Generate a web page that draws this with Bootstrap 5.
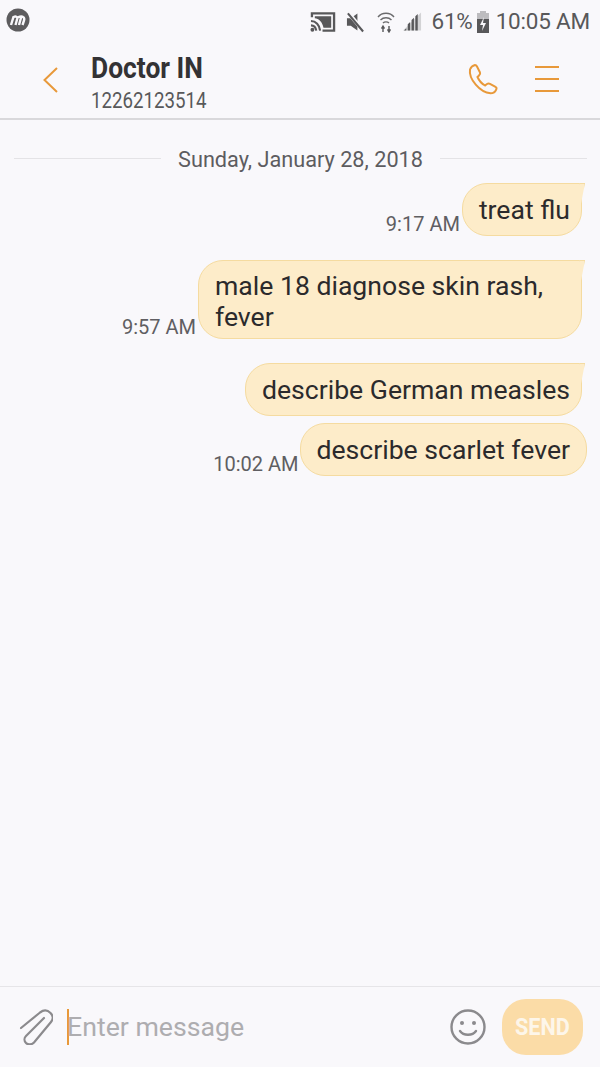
<!DOCTYPE html>
<html lang="en">
<head>
<meta charset="utf-8">
<title>Doctor IN</title>
<link href="https://cdn.jsdelivr.net/npm/bootstrap@5.3.0/dist/css/bootstrap.min.css" rel="stylesheet">
<style>
html,body{height:100%}
body{width:600px;height:1067px;overflow:hidden;background:#f9f8fb;font-family:Roboto,"Liberation Sans",sans-serif;color:#2b2a2c}
.shell{height:1067px}
.statusbar{height:40px;padding:6px 10px 0 6px;color:#58585a}
.statustext{font-size:22.5px;line-height:31px;letter-spacing:-.2px}
.brandmark{width:24px;height:24px;display:block;margin-top:2px}
.topbar{height:80px;border-bottom:2px solid #d9d8db;padding-left:43px}
.backbtn{width:48px;margin-top:1px}
.peername{font-size:30px;font-weight:700;line-height:34px;color:#333234;white-space:nowrap;transform:scaleX(.88);transform-origin:left}
.peernum{font-size:22px;line-height:24px;color:#58585a;transform:scaleX(.85);transform-origin:left;margin-top:4px}
.peerblock{margin-top:6px}
.topactions{gap:36px;padding-right:41px}
.thread{padding:27px 13px 0 14px}
.dateline{font-size:21.7px;line-height:26px;color:#5d5c60;gap:17px;margin-bottom:10px}
.dateline i{flex:1;height:1px;background:#e4e3e6;display:block;margin-top:-3px}
.msgrow{gap:3px}
.stamp{font-size:20px;line-height:24px;color:#5f5e62;white-space:nowrap;margin-right:-1px}
.bubble{position:relative;background:#fdecc9;border:1px solid #f5dba0;border-radius:25px 3px 25px 25px;font-size:26.6px;line-height:31px;padding:10px 11px 10px 16px;color:#2b2a2c;margin-right:5px;max-width:384px}
.bubble::after{content:"";position:absolute;top:-1px;right:-4px;width:5px;height:26px;background:#fdecc9;border-top:1px solid #f5dba0;border-right:1px solid #f5dba0;border-radius:0 0 0 5px;clip-path:polygon(0 0,100% 0,0 100%)}
.plain{border-radius:25px;margin-right:0;padding-right:16px;padding-left:15px}
.plain::after{display:none}
.twoline{padding-top:9px;padding-bottom:6px}
.gap-a{margin-top:24px}
.gap-b{margin-top:7px}
.composer{height:81px;border-top:1px solid #e6e5e8;padding:0 17px 0 19px}
.fakeinput{font-size:26.7px;line-height:37px;color:#aeadb0;border-left:2px solid #e8993a;margin-left:14px;height:36px;flex:1;text-indent:-2px}
.sendbtn{width:81px;height:56px;border:0;border-radius:24px;background:#fbdca7;color:#fdf6ea;font-weight:700;font-size:24px;padding:0;margin-left:16px}
.sendtxt{display:inline-block;transform:scaleX(.9)}
.ic-cast{margin-right:10px}
.ic-mute{margin-right:12px}
.ic-wifi{margin-right:8px}
.ic-signal{margin-right:9px}
.ic-batt{margin:0 6px 0 3px}
</style>
</head>
<body>
<div class="shell d-flex flex-column">
  <div class="statusbar d-flex justify-content-between align-items-start">
    <svg class="brandmark" viewBox="0 0 24 24"><circle cx="12" cy="12" r="11.5" fill="#5d5c5e"/><path d="M5 17 7.500 9c2-.8 3.500-.5 4 .8.300-.8 4-2 5.500-.8 1.500.8 1.500 2 1 3.500L16.500 17M11.500 9.800 9.500 17M15.200 9 13 17" fill="none" stroke="#f9f8fb" stroke-width="2.400"/></svg>
    <div class="d-flex align-items-center statustext">
      <svg width="26" height="22" viewBox="0 0 27 22" class="ic-cast"><path d="M2 6V2h23v18H13" fill="none" stroke="#58585a" stroke-width="2.400"/><path d="M5 5h17v12H14C13 11 9 7 5 7z" fill="#58585a"/><path d="M1 10c5 0 9 4 9.500 10M1 14.500c3 0 5 2.500 5.500 5.500" fill="none" stroke="#58585a" stroke-width="2.200"/><circle cx="2.500" cy="19" r="2" fill="#58585a"/></svg>
      <svg width="19" height="22" viewBox="0 0 20 22" class="ic-mute"><path d="M1 7h4l7-5v18l-7-5H1z" fill="#58585a"/><path d="M3 2l15 18" stroke="#f9f8fb" stroke-width="4"/><path d="M2 2l16 19" stroke="#58585a" stroke-width="2.200"/></svg>
      <svg width="18" height="22" viewBox="0 0 18 22" class="ic-wifi"><path d="M1 6c4-5 12-5 16 0M3.500 9c3-3 8-3 11 0M6 12c1.500-1.500 4.500-1.500 6 0" fill="none" stroke="#6a6a6c" stroke-width="1.400"/><path d="M6 21v-5M4.500 17.500 6 15l1.500 2.500M12 15v5M10.500 18.500 12 21l1.500-2.500" stroke="#58585a" stroke-width="1.400" fill="#58585a"/></svg>
      <svg width="19" height="21" viewBox="0 0 20 21" class="ic-signal"><path d="M0 20 19 1v19z" fill="#d3d3d5"/><path d="M1 20l2.500-2.500V20zM5 20v-6.500l2.500-2.500v9zM9 20v-11l2.500-2.500V20zM13 20V5l2.500-2.500V20z" fill="#58585a"/></svg>
      <span>61%</span>
      <svg width="14" height="22" viewBox="0 0 14 22" class="ic-batt"><path d="M4 0h6v2h3v6H1V2h3z" fill="#bdbcbf"/><path d="M1 8h12v14H1z" fill="#58585a"/><path d="M8 6 4 14h3l-1 6 4-8H7z" fill="#f9f8fb"/></svg>
      <span>10:05 AM</span>
    </div>
  </div>
  <header class="topbar d-flex align-items-center">
    <div class="backbtn"><svg width="15" height="26" viewBox="0 0 15 26" class="d-block"><path d="M14 1 1.500 13 14 25" fill="none" stroke="#e8993a" stroke-width="2"/></svg></div>
    <div class="peerblock flex-grow-1">
      <div class="peername">Doctor IN</div>
      <div class="peernum">12262123514</div>
    </div>
    <div class="topactions d-flex align-items-center">
      <svg width="32" height="32" viewBox="0 0 32 32"><path d="M3 6.500C4 4 6 2.500 8 2c1 0 1.500.5 2 1.500l3 6c.5 1 0 2-1 3l-1.500 1.500c1.500 3.500 4 6.500 7.500 8.500l2-1.500c1-.7 1.800-.8 3-.2l5.500 3c1 .5 1.300 1.500.8 2.500-1 2.500-3.500 4-5.800 4C13 29.500 1.500 16 3 6.500z" fill="none" stroke="#e8993a" stroke-width="2"/></svg>
      <svg width="24" height="26" viewBox="0 0 24 26"><path d="M0 1h24M0 13h24M0 25h24" stroke="#e8993a" stroke-width="2"/></svg>
    </div>
  </header>
  <main class="thread flex-grow-1">
    <div class="dateline d-flex align-items-center"><i></i><span>Sunday, January 28, 2018</span><i></i></div>
    <div class="msgrow d-flex justify-content-end align-items-end"><span class="stamp">9:17 AM</span><div class="bubble">treat flu</div></div>
    <div class="msgrow d-flex justify-content-end align-items-end gap-a"><span class="stamp">9:57 AM</span><div class="bubble twoline">male 18 diagnose skin rash, fever</div></div>
    <div class="msgrow d-flex justify-content-end align-items-end gap-a"><div class="bubble">describe German measles</div></div>
    <div class="msgrow d-flex justify-content-end align-items-end gap-b"><span class="stamp">10:02 AM</span><div class="bubble plain">describe scarlet fever</div></div>
  </main>
  <footer class="composer d-flex align-items-center">
    <svg width="34" height="36" viewBox="0 0 34 36"><path d="M2 19 21 3.500c4-3 8-2 10.500.5s3 6 .5 9L15 33.500c-2.500 2.500-6 2.500-8 .5s-2-5 0-7L25 9" fill="none" stroke="#8b8a8d" stroke-width="2.200" stroke-linecap="round"/></svg>
    <div class="fakeinput">Enter message</div>
    <svg width="36" height="36" viewBox="0 0 36 36"><circle cx="18" cy="18" r="16.500" fill="none" stroke="#8b8a8d" stroke-width="2.400"/><circle cx="12" cy="14" r="2" fill="#8b8a8d"/><circle cx="24" cy="14" r="2" fill="#8b8a8d"/><path d="M10 22c3.500 5 12.500 5 16 0" fill="none" stroke="#8b8a8d" stroke-width="2.400" stroke-linecap="round"/></svg>
    <button type="button" class="btn sendbtn"><span class="sendtxt">SEND</span></button>
  </footer>
</div>
</body>
</html>
